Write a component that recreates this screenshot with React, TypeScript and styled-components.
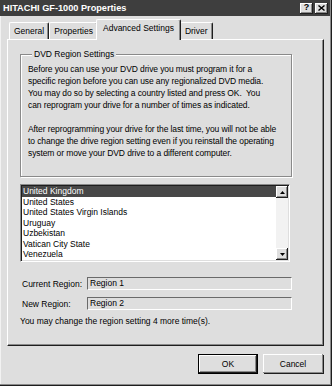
import React from 'react';
import styled, { createGlobalStyle } from 'styled-components';

const GlobalStyle = createGlobalStyle`
  html, body { margin: 0; padding: 0; background: #dedede; }
  body {
    font-family: "Liberation Sans", Arial, sans-serif;
    font-size: 8.5px;
    color: #000;
  }
  * { box-sizing: border-box; }
`;

const Window = styled.div`
  width: 332px;
  height: 386px;
  background: #dedede;
  display: flex;
  flex-direction: column;
  box-shadow: inset -1px -1px #1e1e1e, inset -2px -2px #8a8a8a, inset 1px 0 #f2f2f2;
  overflow: hidden;
`;

const TitleBar = styled.div`
  height: 16px;
  margin-right: 2px;
  background: #3e3e3e;
  display: flex;
  align-items: center;
  padding: 0 2px 0 3px;
`;

const Title = styled.span`
  flex: 1;
  color: #fff;
  font-weight: bold;
  font-size: 9.2px;
  white-space: nowrap;
`;

const TitleButton = styled.div`
  width: 13px;
  height: 11px;
  margin-left: 2px;
  background: #dedede;
  box-shadow: inset -1px -1px #1e1e1e, inset 1px 1px #fff, inset -2px -2px #8a8a8a;
  display: flex;
  align-items: center;
  justify-content: center;
  font-weight: bold;
  font-size: 9px;
  line-height: 9px;
  padding-bottom: 1px;
`;

const Body = styled.div`
  flex: 1;
  display: flex;
  flex-direction: column;
  padding: 3px 8px 0 7px;
`;

const TabStrip = styled.div`
  display: flex;
  align-items: flex-end;
  height: 20px;
  padding-left: 2px;
  position: relative;
  z-index: 1;
`;

const Tab = styled.div<{ $active?: boolean }>`
  height: ${(p) => (p.$active ? '21px' : '17px')};
  margin: ${(p) => (p.$active ? '0 -1px -1px -2px' : '0')};
  padding: ${(p) => (p.$active ? '3px 6px 0 6px' : '3px 4px 0 4px')};
  background: #dedede;
  border-top: 1px solid #fff;
  border-left: 1px solid #fff;
  border-right: 1px solid #1e1e1e;
  border-radius: 2px 2px 0 0;
  box-shadow: inset -1px 0 #8a8a8a;
  white-space: nowrap;
  line-height: 11px;
  z-index: ${(p) => (p.$active ? 2 : 0)};
`;

const Panel = styled.div`
  height: 307px;
  border-top: 1px solid #fff;
  border-left: 1px solid #fff;
  border-right: 1px solid #1e1e1e;
  border-bottom: 1px solid #1e1e1e;
  box-shadow: inset -1px -1px #8a8a8a;
  padding: 9px 0 0 12px;
  display: flex;
  flex-direction: column;
`;

const Group = styled.fieldset`
  width: 272px;
  margin: 0;
  padding: 4px 0 17px 7px;
  border: 1px solid #8a8a8a;
  box-shadow: inset 1px 1px #fff, 1px 1px #fff;
  min-width: 0;
`;

const Legend = styled.legend`
  margin-left: 4px;
  padding: 0 2px;
  line-height: 10px;
  background: #dedede;
`;

const Line = styled.div`
  height: 12px;
  line-height: 12px;
  white-space: pre;
  letter-spacing: -0.1px;
`;

const ListBox = styled.div`
  width: 270px;
  height: 78px;
  margin-top: 7px;
  background: #fff;
  border-top: 1px solid #8a8a8a;
  border-left: 1px solid #8a8a8a;
  border-right: 1px solid #fff;
  border-bottom: 1px solid #fff;
  box-shadow: inset 1px 1px #1e1e1e, inset -1px -1px #dedede;
  padding: 1px;
  display: flex;
  overflow: hidden;
`;

const Items = styled.div`
  flex: 1;
  overflow: hidden;
`;

const Item = styled.div<{ $selected?: boolean }>`
  height: 10.5px;
  line-height: 10.5px;
  padding-left: 1px;
  white-space: nowrap;
  background: ${(p) => (p.$selected ? '#474747' : 'transparent')};
  color: ${(p) => (p.$selected ? '#fff' : '#000')};
`;

const ScrollBar = styled.div`
  width: 12px;
  background: #f2f2f2;
  display: flex;
  flex-direction: column;
  justify-content: space-between;
`;

const ScrollButton = styled.div`
  width: 12px;
  height: 12px;
  background: #dedede;
  box-shadow: inset -1px -1px #1e1e1e, inset 1px 1px #fff, inset -2px -2px #8a8a8a;
  display: flex;
  align-items: center;
  justify-content: center;
`;

const RegionRow = styled.div<{ $first?: boolean }>`
  display: flex;
  align-items: center;
  margin-top: ${(p) => (p.$first ? '15px' : '7px')};
  padding-left: 2px;
`;

const RegionLabel = styled.span`
  width: 65px;
  white-space: nowrap;
`;

const RegionField = styled.div`
  width: 205px;
  height: 13px;
  line-height: 11px;
  padding-left: 2px;
  border-top: 1px solid #6a6a6a;
  border-left: 1px solid #6a6a6a;
  border-right: 1px solid #fff;
  border-bottom: 1px solid #fff;
  white-space: nowrap;
`;

const Note = styled.div`
  margin-top: 6px;
  line-height: 11px;
  white-space: nowrap;
`;

const ButtonRow = styled.div`
  display: flex;
  justify-content: flex-end;
  gap: 5px;
  margin-top: 8px;
`;

const Button = styled.div<{ $default?: boolean }>`
  width: 60px;
  height: 20px;
  display: flex;
  align-items: center;
  justify-content: center;
  background: #dedede;
  border: 1px solid ${(p) => (p.$default ? '#000' : 'transparent')};
  box-shadow: ${(p) =>
    p.$default
      ? 'inset -1px -1px #1e1e1e, inset 1px 1px #fff, inset -2px -2px #8a8a8a'
      : 'inset -1px -1px #8a8a8a, inset 1px 1px #fff, 1px 1px #1e1e1e'};
  ${(p) => (p.$default ? '' : 'border: none; border-top: 0; margin-right: 1px; height: 19px;')}
`;

const countries = [
  'United Kingdom',
  'United States',
  'United States Virgin Islands',
  'Uruguay',
  'Uzbekistan',
  'Vatican City State',
  'Venezuela',
  'Viet Nam',
];

const paragraph = [
  'Before you can use your DVD drive you must program it for a',
  'specific region before you can use any regionalized DVD media.',
  'You may do so by selecting a country listed and press OK.  You',
  'can reprogram your drive for a number of times as indicated.',
  '',
  'After reprogramming your drive for the last time, you will not be able',
  'to change the drive region setting even if you reinstall the operating',
  'system or move your DVD drive to a different computer.',
];

export default function App() {
  return (
    <>
      <GlobalStyle />
      <Window>
        <TitleBar>
          <Title>HITACHI GF-1000 Properties</Title>
          <TitleButton>?</TitleButton>
          <TitleButton>
            <svg width="7" height="6" viewBox="0 0 7 6">
              <path d="M0.5 0.5 L6.5 5.5 M6.5 0.5 L0.5 5.5" stroke="#000" strokeWidth="1.4" />
            </svg>
          </TitleButton>
        </TitleBar>
        <Body>
          <TabStrip>
            <Tab>General</Tab>
            <Tab>Properties</Tab>
            <Tab $active>Advanced Settings</Tab>
            <Tab>Driver</Tab>
          </TabStrip>
          <Panel>
            <Group>
              <Legend>DVD Region Settings</Legend>
              {paragraph.map((l, i) => (
                <Line key={i}>{l}</Line>
              ))}
            </Group>
            <ListBox>
              <Items>
                {countries.map((c, i) => (
                  <Item key={c} $selected={i === 0}>
                    {c}
                  </Item>
                ))}
              </Items>
              <ScrollBar>
                <ScrollButton>
                  <svg width="5" height="3" viewBox="0 0 5 3">
                    <path d="M2.5 0 L5 3 L0 3 Z" fill="#000" />
                  </svg>
                </ScrollButton>
                <ScrollButton>
                  <svg width="5" height="3" viewBox="0 0 5 3">
                    <path d="M0 0 L5 0 L2.5 3 Z" fill="#000" />
                  </svg>
                </ScrollButton>
              </ScrollBar>
            </ListBox>
            <RegionRow $first>
              <RegionLabel>Current Region:</RegionLabel>
              <RegionField>Region 1</RegionField>
            </RegionRow>
            <RegionRow>
              <RegionLabel>New Region:</RegionLabel>
              <RegionField>Region 2</RegionField>
            </RegionRow>
            <Note>You may change the region setting 4 more time(s).</Note>
          </Panel>
          <ButtonRow>
            <Button $default>OK</Button>
            <Button>Cancel</Button>
          </ButtonRow>
        </Body>
      </Window>
    </>
  );
}
